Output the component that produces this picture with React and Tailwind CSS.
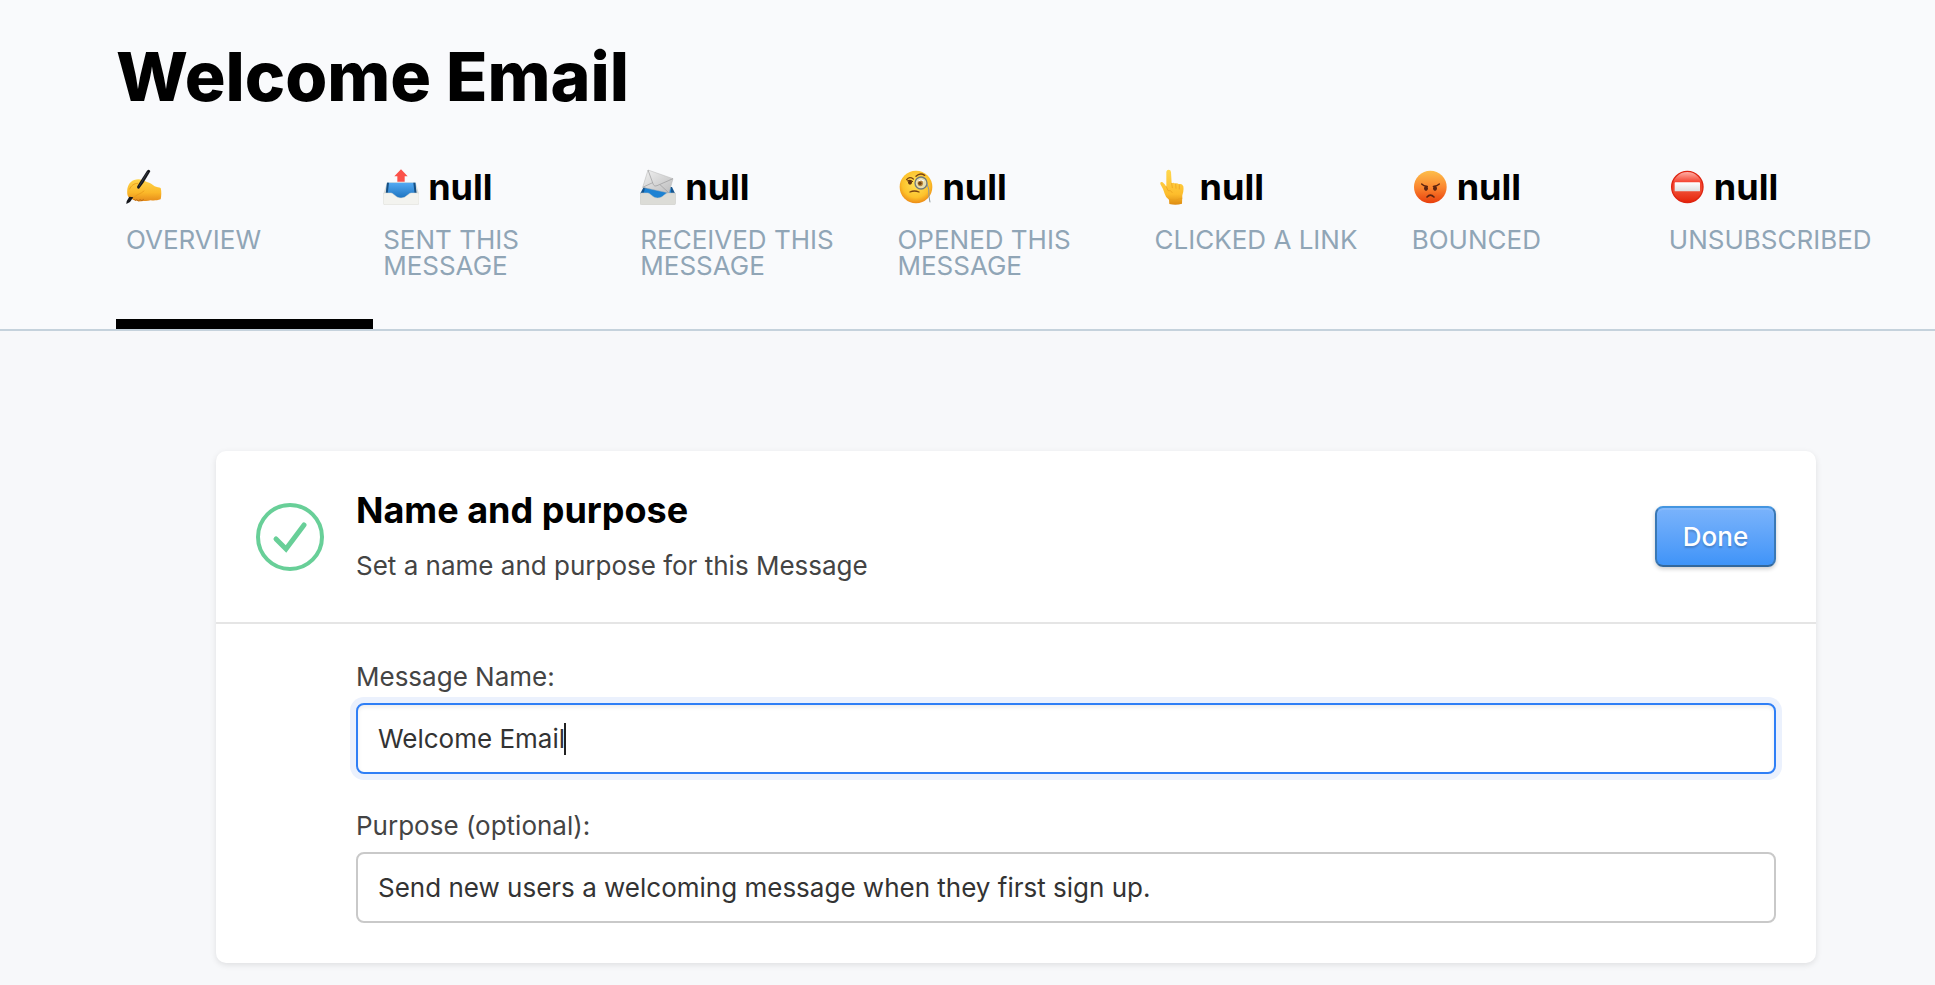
import React, { useState } from "react";

const WritingHandIcon = () => (
  <svg viewBox="33 24 108 108" className="h-9 w-9 shrink-0" aria-hidden="true">
    <defs>
      <linearGradient id="hand" x1="0" y1="0" x2="0" y2="1">
        <stop offset="0" stopColor="#ffd54a" />
        <stop offset="0.6" stopColor="#fbb829" />
        <stop offset="1" stopColor="#e58a1a" />
      </linearGradient>
    </defs>
    <path
      d="M37 84C40 67 52 55 70 55C80 55 86 60 96 63C106 65 112 70 119 76C125 79 132 79 137 81C140 91 139 106 137 115C126 119 115 119 107 118C98 121 87 120 78 121C71 122 65 119 60 118C53 118 50 113 45 112C36 106 36 97 37 84Z"
      fill="url(#hand)"
    />
    <path
      d="M44 84C48 74 57 67 68 67M58 108C64 101 77 99 87 90"
      fill="none"
      stroke="#e89a1b"
      strokeWidth="2.5"
      strokeLinecap="round"
    />
    <path
      d="M56 114Q60 122 65 116Q70 123 75 116Q81 122 86 115"
      fill="none"
      stroke="#b86a16"
      strokeWidth="3"
    />
    <path d="M96 29Q103 23 106 31L85 66L72 83Q66 84 66 77L75 62Z" fill="#15171c" />
    <path d="M43 107L55 109L45 123L34 129L35 121Z" fill="#15171c" />
    <path d="M98 33L72 76" stroke="#555a63" strokeWidth="1.5" />
  </svg>
);

const OutboxIcon = () => (
  <svg viewBox="24 24 108 108" className="h-9 w-9 shrink-0" aria-hidden="true">
    <defs>
      <linearGradient id="outTray" x1="0" y1="0" x2="0" y2="1">
        <stop offset="0" stopColor="#55aaf3" />
        <stop offset="1" stopColor="#1970bd" />
      </linearGradient>
    </defs>
    <path d="M36 64H122L132 99H25Z" fill="#d9dcda" />
    <path d="M36 65H121L124 99L100 114H56L33 99Z" fill="url(#outTray)" />
    <path d="M36 65H42L38 99H32ZM115 65H121L125 99H119Z" fill="#174f82" />
    <path
      d="M25 99Q25 96 29 96H48C57 97 62 111 78 111C94 111 99 97 108 96H128Q132 96 132 99V127Q132 131 127 131H30Q25 131 25 127Z"
      fill="#f3f3ef"
      stroke="#d8d8d3"
      strokeWidth="1.5"
    />
    <path d="M78 25L98 46H89V62H67V46H58Z" fill="#fb5149" />
  </svg>
);

const InboxMailIcon = () => (
  <svg viewBox="16 24 108 108" className="h-9 w-9 shrink-0" aria-hidden="true">
    <defs>
      <linearGradient id="envelope" x1="0" y1="0" x2="1" y2="1">
        <stop offset="0" stopColor="#f1f1f1" />
        <stop offset="1" stopColor="#bcbcbd" />
      </linearGradient>
    </defs>
    <path d="M27 78H112L122 99H16Z" fill="#15558f" />
    <path d="M31 82H109V101L94 111H45L26 100Z" fill="#1d82d3" />
    <path d="M40 27L115 53L103 96L24 79Z" fill="url(#envelope)" stroke="#b4b4b5" strokeWidth="1.5" />
    <path
      d="M40 27L56 71Q60 78 67 74L115 53M24 79L54 65M76 71L103 96"
      fill="none"
      stroke="#98989a"
      strokeWidth="2"
    />
    <path
      d="M16 99Q16 96 20 96H39C49 97 53 111 69 111C85 111 90 97 99 96H119Q123 96 123 99V127Q123 131 118 131H21Q16 131 16 127Z"
      fill="#dcdcd7"
      stroke="#c9c9c4"
      strokeWidth="1.5"
    />
  </svg>
);

const MonocleIcon = () => (
  <svg viewBox="22 24 108 108" className="h-9 w-9 shrink-0" aria-hidden="true">
    <defs>
      <radialGradient id="monocleFace" cx="0.5" cy="0.4" r="0.6">
        <stop offset="0" stopColor="#ffe35a" />
        <stop offset="0.7" stopColor="#fdc22b" />
        <stop offset="1" stopColor="#ed8b16" />
      </radialGradient>
    </defs>
    <circle cx="79" cy="78" r="49" fill="url(#monocleFace)" />
    <path d="M51 56Q59 45 71 54" fill="none" stroke="#7a4312" strokeWidth="4" strokeLinecap="round" />
    <path d="M79 46Q91 34 105 43" fill="none" stroke="#7a4312" strokeWidth="4" strokeLinecap="round" />
    <ellipse cx="61" cy="64" rx="6" ry="7" fill="#63330e" />
    <path d="M52 60Q61 54 70 62" fill="none" stroke="#63330e" strokeWidth="3" />
    <circle cx="94" cy="66" r="18" fill="#e9dfae" stroke="#6f7a7d" strokeWidth="4" />
    <ellipse cx="92" cy="67" rx="8" ry="9" fill="#b8853b" />
    <circle cx="91" cy="67" r="5" fill="#704413" />
    <path d="M86 60Q94 53 103 60" fill="none" stroke="#fff" strokeWidth="3" />
    <path d="M61 93Q74 87 88 93" fill="none" stroke="#7a4312" strokeWidth="4" strokeLinecap="round" />
    <path d="M112 68Q119 82 118 106L121 124" fill="none" stroke="#8c989d" strokeWidth="3" />
  </svg>
);

const PointUpIcon = () => (
  <svg viewBox="44 24 108 108" className="h-9 w-9 shrink-0" aria-hidden="true">
    <defs>
      <linearGradient id="finger" x1="0" y1="0" x2="0" y2="1">
        <stop offset="0" stopColor="#ffd84f" />
        <stop offset="0.7" stopColor="#fdbd2c" />
        <stop offset="1" stopColor="#dd8b12" />
      </linearGradient>
    </defs>
    <path
      d="M78 32Q79 26 85 26Q91 26 92 33L94 67Q99 63 105 68Q110 65 116 70Q124 66 129 76Q131 91 126 103L125 128Q107 134 87 129L86 116Q76 110 73 98L68 84L60 69Q59 62 65 63Q70 65 78 77Z"
      fill="url(#finger)"
    />
    <path
      d="M94 67L96 80M106 68L107 82M117 71V84M78 77L83 89Q92 86 96 95M87 116Q103 121 125 112"
      fill="none"
      stroke="#e99d1c"
      strokeWidth="2"
      strokeLinecap="round"
    />
  </svg>
);

const AngryIcon = () => (
  <svg viewBox="20 24 108 108" className="h-9 w-9 shrink-0" aria-hidden="true">
    <defs>
      <linearGradient id="angryFace" x1="0" y1="0" x2="0" y2="1">
        <stop offset="0" stopColor="#fdbf4b" />
        <stop offset="0.5" stopColor="#fb8730" />
        <stop offset="1" stopColor="#e83e0c" />
      </linearGradient>
    </defs>
    <circle cx="75" cy="78" r="49" fill="url(#angryFace)" />
    <path
      d="M49 69Q54 75 66 76M102 69Q96 75 84 76"
      fill="none"
      stroke="#5d2410"
      strokeWidth="4"
      strokeLinecap="round"
    />
    <ellipse cx="62" cy="82" rx="6" ry="8" fill="#5d2410" />
    <ellipse cx="89" cy="82" rx="6" ry="8" fill="#5d2410" />
    <path d="M65 108Q75 97 86 108" fill="none" stroke="#5d2410" strokeWidth="5" strokeLinecap="round" />
  </svg>
);

const NoEntryIcon = () => (
  <svg viewBox="0 0 108 108" className="h-9 w-9 shrink-0" aria-hidden="true">
    <defs>
      <linearGradient id="noEntry" x1="0" y1="0" x2="0" y2="1">
        <stop offset="0" stopColor="#ffb5ac" />
        <stop offset="0.35" stopColor="#f4402c" />
        <stop offset="0.65" stopColor="#ee4a30" />
        <stop offset="1" stopColor="#e52208" />
      </linearGradient>
      <linearGradient id="noEntryBar" x1="0" y1="0" x2="0" y2="1">
        <stop offset="0" stopColor="#ffffff" />
        <stop offset="1" stopColor="#dedede" />
      </linearGradient>
    </defs>
    <circle cx="55" cy="54" r="47" fill="url(#noEntry)" stroke="#de2411" strokeWidth="4" />
    <rect x="17" y="40" width="76" height="27" rx="2" fill="url(#noEntryBar)" />
  </svg>
);

const tabs = [
  { label: "Overview", Icon: WritingHandIcon, active: true },
  { label: "Sent this message", Icon: OutboxIcon, count: null },
  { label: "Received this message", Icon: InboxMailIcon, count: null },
  { label: "Opened this message", Icon: MonocleIcon, count: null },
  { label: "Clicked a link", Icon: PointUpIcon, count: null },
  { label: "Bounced", Icon: AngryIcon, count: null },
  { label: "Unsubscribed", Icon: NoEntryIcon, count: null },
];

const StatTab = ({ label, Icon, active, count }) => (
  <a
    href="#"
    className={`flex h-40 min-w-0 flex-1 flex-col border-b-10 px-2.5 ${
      active ? "border-black" : "border-transparent"
    }`}
  >
    <span className="flex h-9 items-center gap-[9px] text-4xl font-bold text-black">
      <Icon />
      {!active && <span>{String(count)}</span>}
    </span>
    <span className="mt-[22px] text-[26px] leading-[26px] text-[#90a5b6] uppercase">
      {label}
    </span>
  </a>
);

const inputClass =
  "block h-[71px] w-full rounded-lg border-2 border-[#c9c9c9] bg-white px-5 text-[26px] text-[#333] outline-none focus:border-[#2f7ff6] focus:shadow-[0_0_0_6px_#ebf1fd,inset_0_2px_4px_rgba(0,0,0,0.08)]";

const App = () => {
  const [name, setName] = useState("Welcome Email");
  const [purpose, setPurpose] = useState(
    "Send new users a welcoming message when they first sign up."
  );

  return (
    <div className="min-h-screen bg-[#f7f8fa] font-[Inter,sans-serif]">
      <header className="border-b-2 border-[#c5d2dc] bg-[#f9fafc] pt-8 pr-[19px] pl-29">
        <h1 className="text-[68px] leading-[88px] font-extrabold text-black">
          Welcome Email
        </h1>
        <nav className="mt-[49px] flex">
          {tabs.map((tab) => (
            <StatTab key={tab.label} {...tab} />
          ))}
        </nav>
      </header>

      <main className="pt-30 pr-[19px] pl-29">
        <section className="mr-25 ml-25 rounded-[10px] bg-white shadow-[0_2px_6px_rgba(0,0,0,0.1)]">
          <div className="flex h-[173px] items-center border-b-2 border-[#e5e5e5] px-10">
            <svg
              viewBox="0 0 68 68"
              className="h-17 w-17 shrink-0"
              fill="none"
              stroke="#68cf98"
              aria-hidden="true"
            >
              <circle cx="34" cy="34" r="32" strokeWidth="4" />
              <path d="M20 36L30 46L48 22" strokeWidth="5" strokeLinecap="round" />
            </svg>
            <div className="ml-8 flex-1 pb-0.5">
              <h2 className="text-4xl leading-11 font-bold text-black">
                Name and purpose
              </h2>
              <p className="mt-4 text-[26px] leading-9 text-[#444]">
                Set a name and purpose for this Message
              </p>
            </div>
            <button
              type="button"
              className="h-[61px] w-[121px] rounded-lg border-2 border-[#3a78b5] border-t-[#4495e0] border-b-[#33689c] bg-linear-to-b from-[#7ab3fb] to-[#3f94f8] text-[26px] font-medium text-white shadow-[0_2px_4px_rgba(0,0,0,0.2),inset_0_2px_0_rgba(255,255,255,0.1)] text-shadow-[0_2px_2px_rgba(0,0,0,0.2)]"
            >
              Done
            </button>
          </div>

          <form className="pt-[35px] pr-10 pb-10 pl-35">
            <label htmlFor="name" className="block text-[26px] leading-9 text-[#444]">
              Message Name:
            </label>
            <div className="relative mt-2">
              <input
                id="name"
                type="text"
                autoFocus
                value={name}
                onChange={(e) => setName(e.target.value)}
                className={`${inputClass} caret-transparent`}
              />
              {/* text cursor */}
              <span className="pointer-events-none absolute top-5 left-52 h-8 w-0.5 bg-[#222]" />
            </div>
            <label
              htmlFor="purpose"
              className="mt-[34px] block text-[26px] leading-9 text-[#444]"
            >
              Purpose (optional):
            </label>
            <div className="mt-2">
              <input
                id="purpose"
                type="text"
                value={purpose}
                onChange={(e) => setPurpose(e.target.value)}
                className={inputClass}
              />
            </div>
          </form>
        </section>
      </main>
    </div>
  );
};

export default App;
